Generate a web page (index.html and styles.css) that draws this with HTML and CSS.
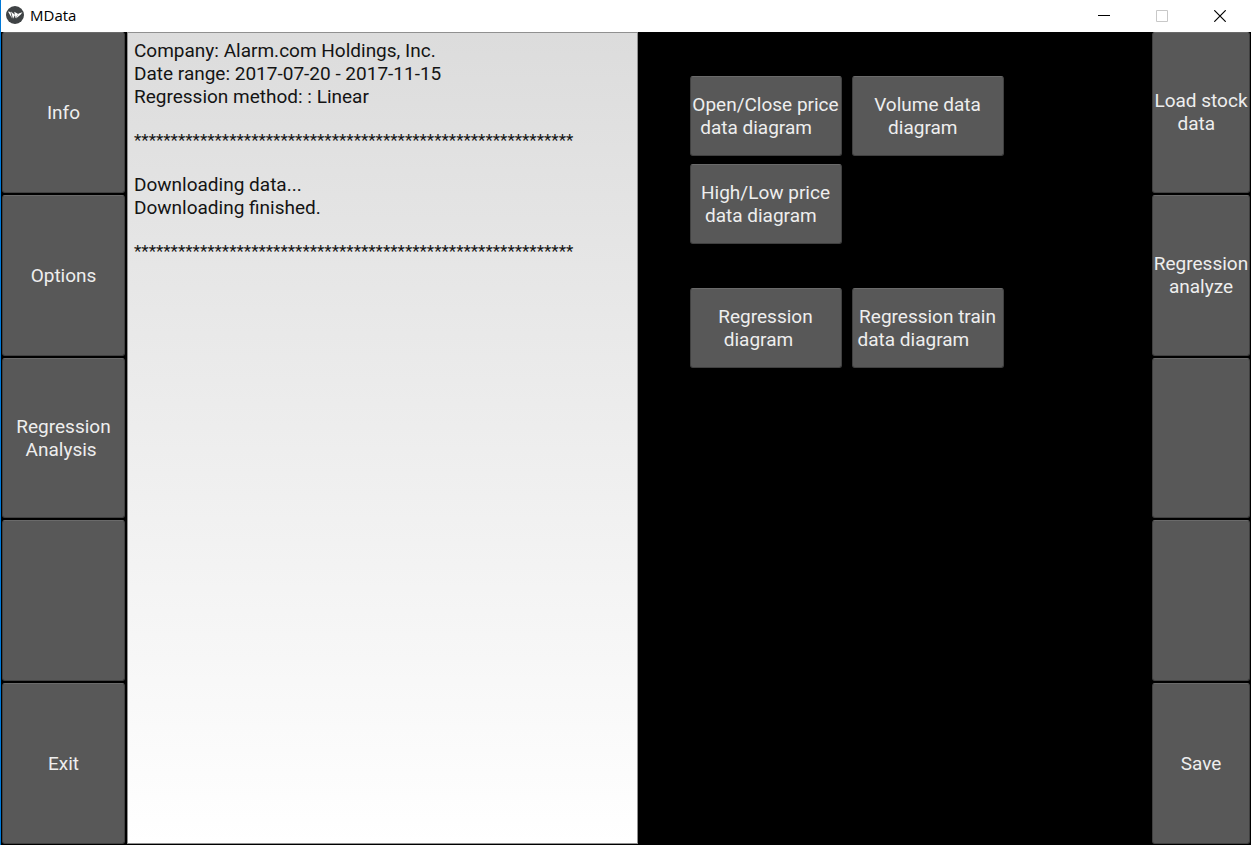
FILE: index.html
```html
<!DOCTYPE html>
<html lang="en">
<head>
<meta charset="utf-8">
<title>MData</title>
<link rel="stylesheet" href="styles.css">
</head>
<body>
<div class="window">
<header class="titlebar">
<svg class="logo" viewBox="0 0 18 18" aria-hidden="true"><circle cx="9" cy="9" r="9" fill="#3f4345"/><path d="M2 5.500l2.500.5 1.500 6.500zM5 5.500l4 3.500-2 3.800zM8.200 5.800l4 2.200-2.600 4.200zM10 12.500l2.600-5 3.900-1.300-2 2.600z" fill="#fff"/></svg>
<span class="title">MData</span>
<div class="controls">
<button class="control" aria-label="Minimize"><svg viewBox="0 0 12 12"><path d="M0 5.500h12" stroke="#000"/></svg></button>
<button class="control" aria-label="Maximize" disabled><svg viewBox="0 0 12 12"><path d="M.5.5h11v11H.5z" stroke="#c8c8c8"/></svg></button>
<button class="control" aria-label="Close"><svg viewBox="0 0 12 12"><path d="M.3.3l11.400 11.400M11.700.3L.3 11.700" stroke="#000" stroke-width="1.200"/></svg></button>
</div>
</header>
<main class="app">
<nav class="side">
<button class="key">Info</button>
<button class="key">Options</button>
<button class="key">Regression
Analysis </button>
<button class="key"></button>
<button class="key">Exit</button>
</nav>
<section class="log">
<p>Company: Alarm.com Holdings, Inc.<br>Date range: 2017-07-20 - 2017-11-15<br>Regression method: : Linear</p>
<p class="rule">************************************************************</p>
<p>Downloading data...<br>Downloading finished.</p>
<p class="rule">************************************************************</p>
</section>
<section class="charts">
<div class="group">
<button class="key">Open/Close price
data diagram    </button>
<button class="key">Volume data
diagram  </button>
<button class="key">High/Low price
data diagram  </button>
</div>
<div class="group">
<button class="key">Regression
diagram   </button>
<button class="key">Regression train
data diagram      </button>
</div>
</section>
<nav class="side">
<button class="key">Load stock
data  </button>
<button class="key">Regression
analyze</button>
<button class="key"></button>
<button class="key"></button>
<button class="key">Save</button>
</nav>
</main>
</div>
</body>
</html>
```
FILE: styles.css
```css
* {
  box-sizing: border-box;
}

body {
  margin: 0;
  background: #000;
  font-family: Roboto, sans-serif;
  font-size: 19px;
  line-height: 23px;
}

.window {
  display: flex;
  flex-direction: column;
  min-height: 100vh;
}

.titlebar {
  display: flex;
  align-items: center;
  height: 32px;
  padding: 0 2px 0 5px;
  background: #fff;
  border-left: 1px solid #0078d7;
}

.logo {
  width: 18px;
  height: 18px;
  margin: 0 6px 2px 0;
}

.title {
  margin-bottom: 2px;
  font-family: "Open Sans", sans-serif;
  font-size: 15px;
  color: #000;
}

.controls {
  display: flex;
  margin-left: auto;
}

.control {
  display: flex;
  align-items: center;
  justify-content: center;
  width: 58px;
  height: 32px;
  padding: 0;
  border: 0;
  background: none;
}

.control svg {
  width: 12px;
  height: 12px;
  fill: none;
}

.app {
  flex: 1;
  display: grid;
  grid-template-columns: minmax(0, 10fr) minmax(0, 41fr) minmax(0, 41fr) minmax(0, 8fr);
  padding-bottom: 1px;
  border-left: 1px solid #0078d7;
}

.side {
  display: grid;
  grid-auto-rows: 1fr;
  gap: 2px;
  padding: 0 1px;
}

.key {
  display: flex;
  align-items: center;
  justify-content: center;
  min-width: 0;
  padding: 0;
  border: 1px solid #404040;
  border-top-color: #6a6a6a;
  border-radius: 3px;
  background: #585858;
  color: #eee;
  font: inherit;
  white-space: pre;
}

.log {
  margin: 0 1px;
  padding: 6px;
  border: 1px solid #909090;
  background: linear-gradient(#dcdcdc, #fff);
  color: #141414;
  overflow: hidden;
}

.log p {
  margin: 0 0 21px;
}

.log .rule {
  font-size: 17px;
}

.charts {
  padding: 44px 51px;
}

.group {
  display: grid;
  grid-template-columns: repeat(auto-fill, 152px);
  grid-auto-rows: 80px;
  gap: 8px 10px;
  margin-bottom: 44px;
}
```
